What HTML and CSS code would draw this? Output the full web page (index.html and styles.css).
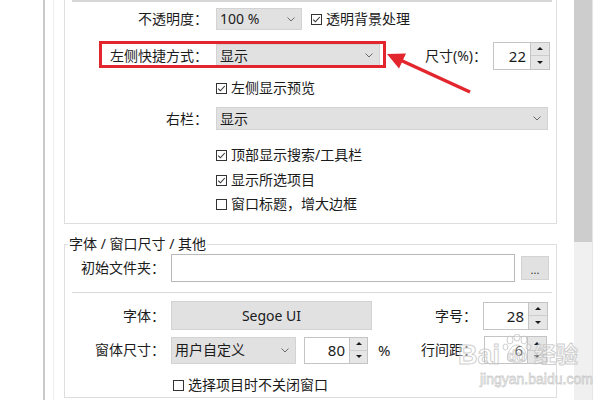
FILE: index.html
```html
<!DOCTYPE html>
<html lang="zh-CN">
<head>
<meta charset="utf-8">
<title>设置</title>
<link rel="stylesheet" href="styles.css">
</head>
<body>
<div class="screen">
  <div class="gutter"></div>
  <div class="panel">
    <div class="content">
      <div class="group group-top">
        <div class="topbar"></div>
        <div class="row r1">
          <span class="lbl">不透明度：</span>
          <div class="select sel-opacity"><span>100 %</span><svg class="chev" width="8" height="5" viewBox="0 0 8 5"><path d="M0.5 0.5 L4 4 L7.5 0.5"/></svg></div>
          <div class="check ml9"><svg class="cb" width="11" height="11" viewBox="0 0 11 11"><rect x="0.5" y="0.5" width="10" height="10"/><path class="tick" d="M2.2 5.6 L4.4 7.8 L8.8 3"/></svg><span>透明背景处理</span></div>
        </div>
        <div class="row r2">
          <span class="lbl">左侧快捷方式：</span>
          <div class="select sel-left"><span>显示</span><svg class="chev" width="8" height="5" viewBox="0 0 8 5"><path d="M0.5 0.5 L4 4 L7.5 0.5"/></svg></div>
          <span class="size-lbl">尺寸(%)：</span>
          <div class="spin spin-22"><div class="spin-field">22</div><div class="spin-btns"><div class="spin-btn up"></div><div class="spin-btn down"></div></div></div>
        </div>
        <div class="row r3 indent">
          <div class="check"><svg class="cb" width="11" height="11" viewBox="0 0 11 11"><rect x="0.5" y="0.5" width="10" height="10"/><path class="tick" d="M2.2 5.6 L4.4 7.8 L8.8 3"/></svg><span>左侧显示预览</span></div>
        </div>
        <div class="row r4">
          <span class="lbl">右栏：</span>
          <div class="select sel-right"><span>显示</span><svg class="chev" width="8" height="5" viewBox="0 0 8 5"><path d="M0.5 0.5 L4 4 L7.5 0.5"/></svg></div>
        </div>
        <div class="row r5 indent">
          <div class="check"><svg class="cb" width="11" height="11" viewBox="0 0 11 11"><rect x="0.5" y="0.5" width="10" height="10"/><path class="tick" d="M2.2 5.6 L4.4 7.8 L8.8 3"/></svg><span>顶部显示搜索/工具栏</span></div>
        </div>
        <div class="row r6 indent">
          <div class="check"><svg class="cb" width="11" height="11" viewBox="0 0 11 11"><rect x="0.5" y="0.5" width="10" height="10"/><path class="tick" d="M2.2 5.6 L4.4 7.8 L8.8 3"/></svg><span>显示所选项目</span></div>
        </div>
        <div class="row r7 indent">
          <div class="check"><svg class="cb" width="11" height="11" viewBox="0 0 11 11"><rect x="0.5" y="0.5" width="10" height="10"/></svg><span>窗口标题，增大边框</span></div>
        </div>
      </div>

      <fieldset class="group group-font">
        <legend>字体 / 窗口尺寸 / 其他</legend>
        <div class="row f1">
          <span class="lbl2">初始文件夹：</span>
          <div class="input folder"></div>
          <div class="btn dots">...</div>
        </div>
        <div class="sep"></div>
        <div class="row f2">
          <span class="lbl2">字体：</span>
          <div class="btn font-btn">Segoe UI</div>
          <span class="rlbl">字号：</span>
          <div class="spin spin-28"><div class="spin-field">28</div><div class="spin-btns"><div class="spin-btn up"></div><div class="spin-btn down"></div></div></div>
        </div>
        <div class="row f3">
          <span class="lbl2">窗体尺寸：</span>
          <div class="select sel-size"><span>用户自定义</span><svg class="chev" width="8" height="5" viewBox="0 0 8 5"><path d="M0.5 0.5 L4 4 L7.5 0.5"/></svg></div>
          <div class="spin spin-80"><div class="spin-field">80</div><div class="spin-btns"><div class="spin-btn up"></div><div class="spin-btn down"></div></div></div>
          <span class="pct">%</span>
          <span class="rlbl rlbl-gap">行间距：</span>
          <div class="spin spin-6"><div class="spin-field">6</div><div class="spin-btns"><div class="spin-btn up"></div><div class="spin-btn down"></div></div></div>
        </div>
        <div class="row f4">
          <div class="check"><svg class="cb" width="11" height="11" viewBox="0 0 11 11"><rect x="0.5" y="0.5" width="10" height="10"/></svg><span>选择项目时不关闭窗口</span></div>
        </div>
      </fieldset>
    </div>
  </div>
  <div class="scrollbar"><div class="thumb"></div></div>
  <div class="edge"></div>

  <div class="redbox"></div>
  <svg class="arrow" width="600" height="400" viewBox="0 0 600 400">
    <line x1="470" y1="92" x2="398" y2="59"/>
    <polygon points="387,54 406,53.5 399,68.5"/>
  </svg>

  <div class="watermark">
    <div class="wm-logo">
      <span class="wm-bai">Bai</span>
      <span class="wm-du">
        <svg class="paw" width="30" height="30" viewBox="0 0 30 30">
          <ellipse cx="8" cy="6" rx="3" ry="4"/>
          <ellipse cx="15" cy="3.5" rx="3" ry="3.5"/>
          <ellipse cx="22" cy="6" rx="3" ry="4"/>
          <ellipse cx="3.5" cy="13" rx="2.5" ry="3"/>
          <ellipse cx="26.5" cy="13" rx="2.5" ry="3"/>
          <path d="M15 11 C9 11 4 20 6 26 C8 29 22 29 24 26 C26 20 21 11 15 11 Z"/>
        </svg>
        <span class="wm-dutext">du</span>
      </span>
      <span class="wm-jy">经验</span>
    </div>
    <div class="wm-url">jingyan.baidu.com</div>
  </div>
</div>
</body>
</html>
```

FILE: styles.css
```css
* { box-sizing: border-box; }

body {
  margin: 0;
  font-family: "Noto Sans", "Noto Sans CJK SC", sans-serif;
  font-size: 14px;
  line-height: 20px;
  color: #1b1b1b;
  background: #fff;
}

.screen {
  position: relative;
  width: 600px;
  height: 400px;
  overflow: hidden;
  display: flex;
  background: #fff;
}

.gutter { width: 43px; flex: none; }

.panel {
  width: 531px;
  flex: none;
  border-left: 2px solid #c9c9c9;
}

.content {
  height: 100%;
  margin-left: 8px;
  border-left: 1px solid #ededed;
  padding-left: 10px;
  padding-right: 17px;
}

.scrollbar {
  width: 18px;
  flex: none;
  background: #f0f0f0;
}

.thumb {
  height: 242px;
  background: #cdcdcd;
}

.edge {
  flex: 1;
  border-left: 1px solid #e6e6e6;
}

/* group boxes */
.group-top {
  border: 1px solid #dedede;
  border-top: none;
  padding-bottom: 7px;
}

.topbar {
  height: 2px;
  margin: 0 4px 0 7px;
  background: #d6d6d6;
}

.row {
  display: flex;
  align-items: center;
  white-space: nowrap;
}

.r1 { margin-top: 6px; height: 22px; }
.r2 { margin-top: 11px; height: 29px; }
.r3 { margin-top: 6px; height: 24px; }
.r4 { margin-top: 6px; height: 25px; }
.r5 { margin-top: 12px; height: 24px; }
.r6 { margin-top: 1px; height: 24px; }
.r7 { height: 24px; }

.lbl {
  width: 143px;
  flex: none;
  margin-right: 8px;
  text-align: right;
}

.indent { padding-left: 151px; }

.select {
  display: flex;
  align-items: center;
  justify-content: space-between;
  height: 23px;
  padding: 0 6px 0 3px;
  background: #e1e1e1;
  border: 1px solid #d3d3d3;
  flex: none;
}

.chev path {
  fill: none;
  stroke: #6a6a6a;
  stroke-width: 1;
}

.sel-opacity { width: 86px; height: 22px; }
.sel-left { width: 164px; }
.sel-right { width: 332px; }
.sel-size { width: 125px; height: 27px; margin-right: 8px; }

.check {
  display: flex;
  align-items: center;
}

.cb {
  flex: none;
  margin-right: 4px;
}

.cb rect {
  fill: #fff;
  stroke: #333;
  stroke-width: 1;
}

.cb .tick {
  fill: none;
  stroke: #333;
  stroke-width: 1.1;
}

.ml9 { margin-left: 9px; }

.size-lbl {
  margin-left: auto;
  margin-right: 6px;
}

/* spin boxes */
.spin {
  display: flex;
  flex: none;
  height: 28px;
}

.spin-field {
  flex: 1;
  background: #fff;
  border: 1px solid #c4c4c4;
  text-align: right;
  padding-right: 4px;
  display: flex;
  align-items: center;
  justify-content: flex-end;
  font-size: 15px;
}

.spin-btns {
  width: 19px;
  flex: none;
  display: flex;
  flex-direction: column;
  border: 1px solid #c4c4c4;
  border-left: none;
}

.spin-btn {
  flex: 1;
  background: #e6e6e6;
  display: flex;
  align-items: center;
  justify-content: center;
}

.spin-btn + .spin-btn { border-top: 1px solid #cdcdcd; }

.spin-btn::after {
  content: "";
  border-left: 3px solid transparent;
  border-right: 3px solid transparent;
}

.spin-btn.up::after { border-bottom: 3px solid #1a1a1a; }
.spin-btn.down::after { border-top: 3px solid #1a1a1a; }

.spin-22 { width: 57px; margin-right: 6px; }
.spin-28 { width: 65px; margin-right: 5px; }
.spin-80 { width: 64px; height: 27px; }
.spin-80 .spin-btns { width: 18px; }
.spin-6 { width: 63px; margin-right: 6px; }

/* second group */
.group-font {
  margin: 10px 0 0;
  padding: 0 3px;
  border: 1px solid #dedede;
  min-width: 0;
}

.group-font legend {
  padding: 0 1px;
  line-height: 20px;
}

.lbl2 {
  width: 97px;
  flex: none;
  margin-right: 6px;
  text-align: right;
}

.f1 { height: 28px; }
.f2 { margin-top: 8px; height: 29px; }
.f3 { margin-top: 5px; height: 30px; }
.f4 { margin-top: 8px; height: 24px; padding-left: 105px; }

.input {
  background: #fff;
  border: 1px solid #b9b9b9;
}

.folder { width: 344px; height: 28px; margin-right: 6px; flex: none; }

.btn {
  background: #e1e1e1;
  border: 1px solid #d3d3d3;
  display: flex;
  align-items: center;
  justify-content: center;
  flex: none;
}

.dots {
  width: 28px;
  height: 24px;
  font-size: 11px;
  padding-top: 4px;
  color: #333;
}

.sep {
  height: 1px;
  margin: 10px 1px 0 4px;
  background: #d9d9d9;
}

.font-btn {
  width: 201px;
  height: 29px;
  font-size: 14px;
}

.rlbl {
  margin-left: auto;
  margin-right: 6px;
}

.rlbl-gap { margin-right: 7px; }

.pct { margin-left: 10px; font-size: 15px; }

/* annotation overlay */
.redbox {
  position: absolute;
  left: 99px;
  top: 41px;
  width: 287px;
  height: 27px;
  border: 3px solid #e3262d;
}

.arrow {
  position: absolute;
  left: 0;
  top: 0;
  pointer-events: none;
}

.arrow line {
  stroke: #e3262d;
  stroke-width: 3.5;
}

.arrow polygon { fill: #e3262d; }

/* watermark overlay */
.watermark {
  position: absolute;
  left: 458px;
  top: 330px;
  pointer-events: none;
  color: rgba(255, 255, 255, 0.4);
}

.wm-logo {
  display: flex;
  align-items: flex-end;
  height: 40px;
}

.wm-bai, .wm-jy, .wm-dutext, .wm-url {
  -webkit-text-stroke: 1px rgba(190, 190, 190, 0.75);
  font-family: "Liberation Sans", "Noto Sans CJK SC", sans-serif;
}

.wm-bai {
  font-size: 27px;
  font-weight: bold;
  line-height: 30px;
}

.wm-du {
  position: relative;
  width: 30px;
  height: 40px;
  margin: 0 2px;
}

.paw {
  position: absolute;
  left: 0;
  top: 4px;
}

.paw ellipse, .paw path {
  fill: rgba(255, 255, 255, 0.3);
  stroke: rgba(190, 190, 190, 0.75);
  stroke-width: 1;
}

.wm-dutext {
  position: absolute;
  left: 5px;
  top: 16px;
  font-size: 15px;
  font-weight: bold;
  line-height: 20px;
}

.wm-jy {
  font-size: 22px;
  line-height: 30px;
  font-weight: bold;
}

.wm-url {
  margin-left: 22px;
  font-size: 14px;
  line-height: 18px;
  -webkit-text-stroke: 0.8px rgba(190, 190, 190, 0.75);
}
```
